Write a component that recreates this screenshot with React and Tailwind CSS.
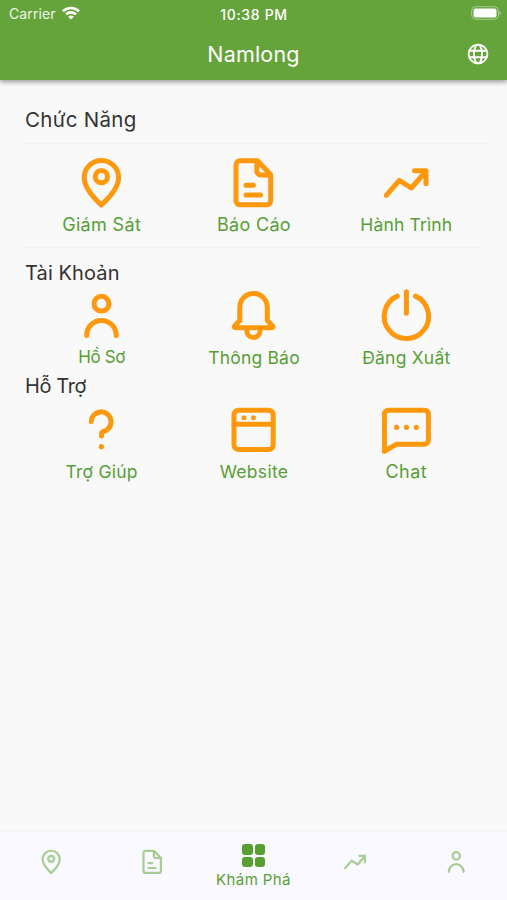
import React from "react";

const shapes = {
  pin: (
    <>
      <path d="M30.3 52C26.300 48 13.200 36.500 13.200 24.700a17.200 17.200 0 0 1 34.400 0C47.600 36.500 34.600 48 30.300 52Z" />
      <circle cx="30.400" cy="23.700" r="6.100" />
    </>
  ),
  report: (
    <>
      <path d="M34.5 7.8H17a4 4 0 0 0-4 4v36a4 4 0 0 0 4 4h26.7a4 4 0 0 0 4-4V21.8Z" />
      <path d="M33.8 8.5V18a4 4 0 0 0 4 4h9.500M23 32.300h7.500M23 42h14.500" />
    </>
  ),
  trend: <path d="M10.300 42.300L23.300 27.300L35.300 35L49.800 18.500M38.500 17.700H50V30.700" />,
  person: (
    <>
      <circle cx="30.500" cy="17.700" r="7.400" />
      <path d="M15.700 49.600c0-8.400 6.400-15.200 14.700-15.200s14.800 6.800 14.800 15.200" />
    </>
  ),
  bell: (
    <>
      <path d="M30.500 7.500C22.500 7.500 16.800 13.800 16.800 21.500V34.500L11.600 40q-1 1.700 1 1.700H48.600q2 0 1-1.700L44.300 34.500V21.500C44.300 13.800 38.500 7.500 30.500 7.500Z" />
      <path d="M23.600 43.500c0 10.700 13.600 10.700 13.600 0" />
    </>
  ),
  power: <path d="M21.300 10.100a22.200 22.200 0 1 0 18.200 0M30.400 5.700v21.500" />,
  help: (
    <>
      <path d="M20.300 21.500a9.900 9.900 0 1 1 12.200 9.900q-2 .5-2 2.500v2" />
      <circle cx="30.400" cy="46.700" r="2.600" fill="currentColor" stroke="none" />
    </>
  ),
  website: (
    <>
      <rect x="11" y="10.200" width="39.200" height="39.300" rx="4.500" />
      <path d="M11 24.300h39" />
      <circle cx="20.900" cy="17.700" r="2.500" fill="currentColor" stroke="none" />
      <circle cx="30.500" cy="17.700" r="2.500" fill="currentColor" stroke="none" />
    </>
  ),
  chat: (
    <>
      <path d="M8.400 51.400V14.200a4 4 0 0 1 4-4h36a4 4 0 0 1 4 4v26a4 4 0 0 1-4 4H20.500Z" />
      <g fill="currentColor" stroke="none">
        <circle cx="20.600" cy="27.300" r="2.600" />
        <circle cx="30.400" cy="27.300" r="2.600" />
        <circle cx="40.300" cy="27.300" r="2.600" />
      </g>
    </>
  ),
};

function Icon({ name, className, weight = 5 }) {
  return (
    <svg viewBox="0 0 60 60" className={className} fill="none" stroke="currentColor" strokeWidth={weight} strokeLinecap="round" strokeLinejoin="round">
      {shapes[name]}
    </svg>
  );
}

function Tile({ icon, label, spacing }) {
  return (
    <button className="flex flex-col items-center">
      <Icon name={icon} className="size-[60px] text-[#ff980c]" />
      <span className={`h-6 -mt-px whitespace-nowrap pl-px leading-[25px] text-[#559f35] ${spacing}`}>{label}</span>
    </button>
  );
}

function NavItem({ icon }) {
  return (
    <button className="flex h-full items-center justify-center pb-[9px]">
      <Icon name={icon} className="size-[30px] text-[#a5cd94]" weight={4.4} />
    </button>
  );
}

export default function App() {
  return (
    <div className="flex h-[900px] w-[507px] flex-col overflow-hidden bg-[#f9f9f9] font-['Inter',sans-serif]">
      <header className="z-10 h-20 shrink-0 bg-[#65a33b] text-white shadow-[0_2px_5px_rgba(0,0,0,0.4)]">
        <div className="grid h-[26px] grid-cols-[1fr_auto_1fr] items-center pl-[9px] pr-[6px]">
          <div className="flex items-center gap-[6px] text-[14px] text-white/90">
            <span className="tracking-[0.1px]">Carrier</span>
            <svg viewBox="0 0 18 14" className="h-[14px] w-[18px]" fill="none" stroke="white" strokeWidth="2.600">
              <path d="M1 5.200a11.500 11.500 0 0 1 16 0M4 8.400a7.200 7.200 0 0 1 10 0" />
              <path d="M9 13.600L6.200 10.800a4 4 0 0 1 5.600 0Z" fill="white" stroke="none" />
            </svg>
          </div>
          <div className="pr-[2px] pt-[2px] text-center text-[14px] font-medium tracking-[0.65px]">10:38 PM</div>
          <svg viewBox="0 0 30 14" className="h-[14px] w-[30px] justify-self-end">
            <rect x=".7" y=".7" width="26.600" height="12.600" rx="4" fill="none" stroke="white" strokeOpacity=".45" />
            <rect x="2.500" y="2.500" width="23" height="9" rx="2" fill="white" />
            <path d="M28.500 5c1.700.6 1.700 3.400 0 4Z" fill="white" fillOpacity=".5" />
          </svg>
        </div>
        <div className="grid h-[54px] grid-cols-[1fr_auto_1fr] items-center">
          <h1 className="col-start-2 text-[21.500px] leading-[56px] tracking-[0.2px]">Namlong</h1>
          <svg viewBox="0 0 22 22" className="mr-[18px] size-[22px] justify-self-end" fill="none" stroke="white" strokeWidth="1.900">
            <circle cx="11" cy="11" r="9.400" />
            <ellipse cx="11" cy="11" rx="4" ry="9.400" />
            <path d="M2.200 7.800h17.600M2.200 14.200h17.600" />
          </svg>
        </div>
      </header>

      <main className="flex-1 px-[25px] pt-[25px] text-[#333]">
        <h2 className="h-[38px] text-[20.500px] leading-[30px] tracking-[0.3px]">Chức Năng</h2>
        <div className="-mr-1 h-px bg-[#f2f2f2]" />
        <section className="grid h-[103px] grid-cols-3 pt-[9px]">
          <Tile icon="pin" label="Giám Sát" spacing="text-[18px] tracking-[0.35px]" />
          <Tile icon="report" label="Báo Cáo" spacing="text-[18px] tracking-[0.3px]" />
          <Tile icon="trend" label="Hành Trình" spacing="text-[17.500px] tracking-[0.15px]" />
        </section>
        <div className="h-px bg-[#f2f2f2]" />
        <h2 className="mt-[9px] h-[29px] text-[20px] leading-[32px] tracking-[0.1px]">Tài Khoản</h2>
        <section className="grid h-[84px] grid-cols-3">
          <Tile icon="person" label="Hồ Sơ" spacing="text-[17px] tracking-[-0.4px]" />
          <Tile icon="bell" label="Thông Báo" spacing="text-[17.500px] tracking-[0.2px]" />
          <Tile icon="power" label="Đăng Xuất" spacing="text-[17.500px] tracking-[0.2px]" />
        </section>
        <h2 className="h-[30px] text-[20px] leading-[32px] tracking-[-0.4px]">Hỗ Trợ</h2>
        <section className="grid grid-cols-3">
          <Tile icon="help" label="Trợ Giúp" spacing="text-[17.500px] tracking-[0.25px]" />
          <Tile icon="website" label="Website" spacing="text-[17.500px] tracking-[0.3px]" />
          <Tile icon="chat" label="Chat" spacing="text-[18px] tracking-[0.5px]" />
        </section>
      </main>

      <nav className="grid h-[70px] shrink-0 grid-cols-5 border-t-2 border-[#f4f4f7] bg-[#f9f9ff]">
        <NavItem icon="pin" />
        <NavItem icon="report" />
        <button className="flex flex-col items-center pt-3 text-[#5ba136]">
          <span className="grid grid-cols-2 gap-[2px] pl-px">
            <span className="size-[10.500px] rounded-[3px] bg-[#57a02f]" />
            <span className="size-[10.500px] rounded-[3px] bg-[#57a02f]" />
            <span className="size-[10.500px] rounded-[3px] bg-[#57a02f]" />
            <span className="size-[10.500px] rounded-[3px] bg-[#57a02f]" />
          </span>
          <span className="mt-[3px] whitespace-nowrap text-[15px] leading-5 tracking-[0.4px]">Khám Phá</span>
        </button>
        <NavItem icon="trend" />
        <NavItem icon="person" />
      </nav>
    </div>
  );
}
